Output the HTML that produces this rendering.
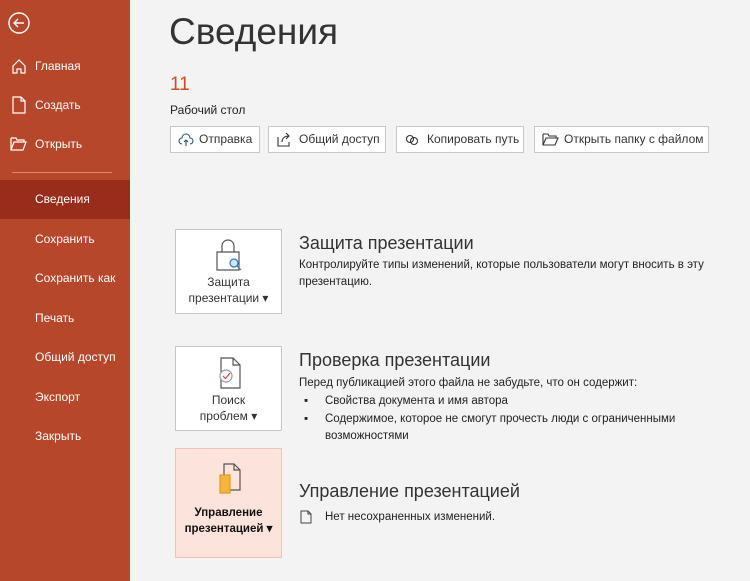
<!DOCTYPE html>
<html><head><meta charset="utf-8"><style>
body{margin:0;width:750px;height:581px;overflow:hidden;background:#f3f3f3;font-family:"Liberation Sans",sans-serif;position:relative}
.sb{position:absolute;left:0;top:0;width:130px;height:581px;background:#b7472a;color:#fff}
.it{position:absolute;left:0;width:130px;font-size:12px;color:#fff}
.it span{position:absolute;left:35px;top:-7px}
.sel{position:absolute;left:0;top:180px;width:130px;height:39px;background:#9a2c1c}
.a{position:absolute;color:#222}
.btn{position:absolute;top:126px;height:27px;background:#fff;border:1px solid #c8c8c8;box-sizing:border-box;font-size:12px;color:#333;line-height:25px;padding-left:28px}
.btn svg{position:absolute;left:7px;top:5px}
.card{position:absolute;left:175px;width:107px;background:#fff;border:1px solid #c6c6c6;box-sizing:border-box;font-size:12px;text-align:center;color:#333;line-height:16px}
.h{position:absolute;left:299px;font-size:18px;color:#333}
.t{position:absolute;left:299px;font-size:11.5px;color:#222;line-height:17px}
.b{position:absolute;left:304px;font-size:11.5px;color:#222;line-height:17px}
.b span{position:absolute;left:21px;top:0;white-space:nowrap}
</style></head><body>
<div class="sb">
<svg style="position:absolute;left:7px;top:11px" width="24" height="24" viewBox="0 0 24 24" fill="none" stroke="#fff" stroke-width="1.4"><circle cx="12" cy="12" r="10"/><path d="M17 12H7M11 8l-4 4 4 4"/></svg>
<div class="it" style="top:66px"><svg style="position:absolute;left:11px;top:-8px" width="16" height="16" fill="none" stroke="#fff" stroke-width="1.2"><path d="M2 8L8 2l6 6v7H10v-4H6v4H2z"/></svg><span>Главная</span></div>
<div class="it" style="top:105px"><svg style="position:absolute;left:11px;top:-9px" width="16" height="18" fill="none" stroke="#fff" stroke-width="1.2"><path d="M2 1h8l4 4v12H2zM10 1v4h4"/></svg><span>Создать</span></div>
<div class="it" style="top:144px"><svg style="position:absolute;left:10px;top:-7px" width="18" height="14" fill="none" stroke="#fff" stroke-width="1.2"><path d="M1 1h5l1 2h7v2M1 1v12h12l3-8H4L1 13"/></svg><span>Открыть</span></div>
<div style="position:absolute;left:12px;top:172px;width:100px;height:1px;background:#d98a76"></div>
<div class="sel"></div>
<div class="it" style="top:199px"><span>Сведения</span></div>
<div class="it" style="top:239px"><span>Сохранить</span></div>
<div class="it" style="top:278px"><span>Сохранить как</span></div>
<div class="it" style="top:318px"><span>Печать</span></div>
<div class="it" style="top:357px"><span>Общий доступ</span></div>
<div class="it" style="top:397px"><span>Экспорт</span></div>
<div class="it" style="top:436px"><span>Закрыть</span></div>
</div>
<div class="a" style="left:169px;top:11px;font-size:37px;color:#333">Сведения</div>
<div class="a" style="left:170px;top:74px;font-size:19px;color:#c4502a">11</div>
<div class="a" style="left:170px;top:103px;font-size:12px">Рабочий стол</div>
<div class="btn" style="left:170px;width:90px"><svg width="16" height="16" fill="none" stroke="#357" stroke-width="1.1"><path d="M4 12a3 3 0 010-6 4 4 0 018 0 3 3 0 010 6M8 14V8M6 10l2-2 2 2"/></svg>Отправка</div>
<div class="btn" style="left:268px;width:118px;padding-left:30px"><svg width="16" height="16" fill="none" stroke="#333" stroke-width="1.1"><path d="M2 5v9h11V10M6 10c0-4 3-6 7-6M10 1l3 3-3 3"/></svg>Общий доступ</div>
<div class="btn" style="left:396px;width:128px;padding-left:30px"><svg width="16" height="16" fill="none" stroke="#333" stroke-width="1.1"><circle cx="6" cy="7" r="3.5"/><circle cx="10" cy="9" r="3.5"/></svg>Копировать путь</div>
<div class="btn" style="left:534px;width:175px;padding-left:29px"><svg width="18" height="16" fill="none" stroke="#333" stroke-width="1.1"><path d="M1 2h5l1 2h7v2M1 2v11h12l3-7H4L1 13"/></svg>Открыть папку с файлом</div>

<div class="card" style="top:229px;height:85px"><svg style="display:block;margin:8px auto 0" width="30" height="34" fill="none" stroke="#555" stroke-width="1.2"><path d="M8 14V8a6 6 0 0112 0v6M3 14h22v18H3z"/><circle cx="20" cy="25" r="4" stroke="#2a7ab8" fill="#cfe6f6"/><path d="M23 28l4 4" stroke="#2a7ab8"/></svg><div style="margin-top:2px">Защита<br>презентации ▾</div></div>
<div class="card" style="top:346px;height:85px"><svg style="display:block;margin:10px auto 0" width="26" height="32" fill="none" stroke="#555" stroke-width="1.2"><path d="M5 1h12l7 7v23H5zM17 1v7h7"/><circle cx="10" cy="19" r="6" fill="#fff" stroke="#999"/><path d="M7 19l2.5 2.5L14 16" stroke="#d04050"/></svg><div style="margin-top:3px">Поиск<br>проблем ▾</div></div>
<div class="card" style="top:448px;height:110px;background:#fce4dc;border-color:#f1c2b2"><svg style="display:block;margin:14px auto 0" width="26" height="32" fill="none" stroke="#555" stroke-width="1.2"><path d="M8 1h10l6 6v20H8zM18 1v6h6"/><rect x="4" y="12" width="10" height="18" fill="#f5b43c" stroke="#e09a20"/></svg><div style="margin-top:10px;color:#111;font-weight:bold;font-size:11.5px">Управление<br>презентацией ▾</div></div>

<div class="h" style="top:233px">Защита презентации</div>
<div class="t" style="top:257px">Контролируйте типы изменений, которые пользователи могут вносить в эту<br>презентацию.</div>
<div class="h" style="top:350px">Проверка презентации</div>
<div class="t" style="top:375px">Перед публикацией этого файла не забудьте, что он содержит:</div>
<div class="b" style="top:393px">▪<span>Свойства документа и имя автора</span></div>
<div class="b" style="top:411px">▪<span>Содержимое, которое не смогут прочесть люди с ограниченными<br>возможностями</span></div>
<div class="h" style="top:481px">Управление презентацией</div>
<svg style="position:absolute;left:300px;top:510px" width="12" height="14" fill="none" stroke="#444" stroke-width="1"><path d="M1 1h7l3 3v9H1zM8 1v3h3"/></svg>
<div class="t" style="top:509px;left:325px">Нет несохраненных изменений.</div>
</body></html>
